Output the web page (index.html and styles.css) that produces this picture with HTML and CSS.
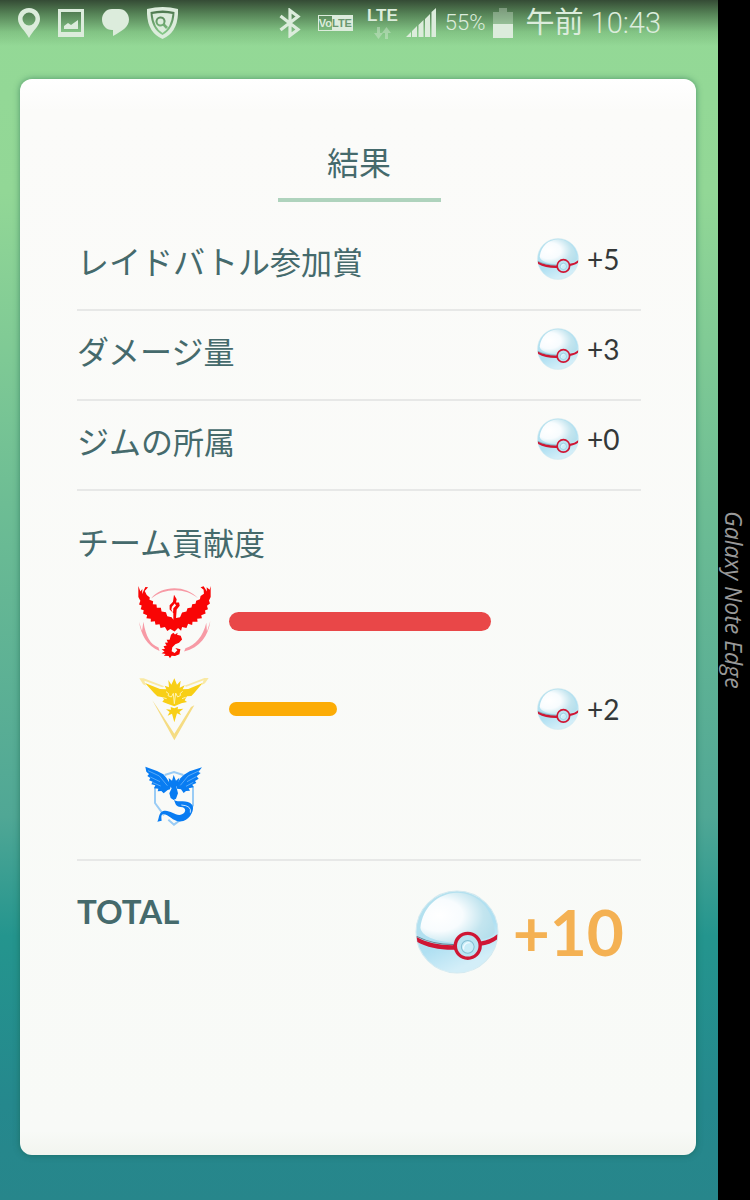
FILE: index.html
```html
<!DOCTYPE html>
<html lang="ja">
<head>
  <meta charset="UTF-8" />
  <meta name="viewport" content="width=device-width, initial-scale=1.0" />
  <title>結果</title>
  <link rel="stylesheet" href="styles.css">
</head>
<body>
  <!-- shared ball icon -->
  <svg class="defs" width="0" height="0" aria-hidden="true">
    <defs>
      <linearGradient id="ballBase" x1="0" y1="0.1" x2="0.4" y2="1">
        <stop offset="0" stop-color="#b5e1ee" />
        <stop offset="0.65" stop-color="#b0e0f2" />
        <stop offset="1" stop-color="#d3eef8" />
      </linearGradient>
      <radialGradient id="ballShine" cx="0.25" cy="0.45" r="0.8">
        <stop offset="0" stop-color="#fff" />
        <stop offset="0.4" stop-color="#f8fcfe" />
        <stop offset="0.75" stop-color="#c3e5ef" />
        <stop offset="1" stop-color="#b5dfec" />
      </radialGradient>
      <symbol id="ball" viewBox="0 0 248 250">
        <circle cx="124" cy="125" r="122" fill="url(#ballBase)" stroke="#d2e9f0" stroke-width="3" />
        <path d="M15 112C22 52 65 10 124 8C188 8 229 58 236 119C240 134 224 143 196 147C174 117 132 122 121 157C74 154 20 143 15 112Z" fill="url(#ballShine)" />
        <path d="M4 140C35 158 75 165 118 164L118 178C75 179 33 171 6 155Z" fill="#cf1634" />
        <path d="M4 138C38 155 75 163 118 162" fill="none" stroke="#65818f" stroke-width="3" />
        <path d="M194 153C213 151 230 144 244 132L243 147C230 157 212 164 194 166Z" fill="#cf1634" />
        <circle cx="156" cy="166" r="37" fill="#b9e4f2" stroke="#cf1634" stroke-width="10" />
        <circle cx="156" cy="169" r="19" fill="#c9edf8" stroke="#85bfd3" stroke-width="3" />
        <path d="M144 177A16 16 0 0 1 162 157" fill="none" stroke="#eefaff" stroke-width="4" />
      </symbol>
    </defs>
  </svg>

  <div class="screen">
    <header class="status-bar">
      <div class="status-left">
        <svg width="22" height="30" viewBox="0 0 22 30"><path fill-rule="evenodd" d="M11 0C4 0 0 5 0 11C0 18 7 22 11 30C15 22 22 18 22 11C22 5 18 0 11 0ZM11 4.500A6.500 6.500 0 1 1 11 17.500A6.500 6.500 0 1 1 11 4.500Z" /></svg>
        <svg width="26" height="28" viewBox="0 0 26 28"><path fill-rule="evenodd" d="M0 0H26V28H0ZM3 3V23H23V3Z" /><path d="M6 20V17L10 14L13 16L20 11V20Z" /></svg>
        <svg width="27" height="27" viewBox="0 0 27 27"><path d="M10 0H17C23 0 27 5 27 10.500C27 18 20 22 11 27V21H10C4 21 0 16 0 10.500C0 5 4 0 10 0Z" /></svg>
        <svg width="31" height="32" viewBox="0 0 31 32"><path fill-rule="evenodd" d="M0 2Q16 -2 31 2Q32 25 15.500 32Q-1 25 0 2ZM3.500 5Q4 22 15.500 28Q27 22 27.500 5Q16 2 3.500 5Z" /><path fill-rule="evenodd" d="M5.500 7Q16 5 25.500 7Q24 21 15.500 26Q7 21 5.500 7ZM13 9.500A5 5 0 1 0 16 18.800L19 22L21 20L18 17A5 5 0 0 0 13 9.500ZM13.500 11.500A3 3 0 1 1 13.500 17.500A3 3 0 1 1 13.500 11.500Z" /></svg>
      </div>
      <div class="status-right">
        <svg width="22" height="30" viewBox="0 0 22 30"><path d="M1.500 8L19 21.500L11 27.500V2.500L19 8.500L1.500 22" fill="none" stroke="#dcecdc" stroke-width="3.200" /></svg>
        <span class="volte"><span class="volte-vo">Vo</span><span class="volte-lte">LTE</span></span>
        <div class="network">
          <span>LTE</span>
          <svg width="17" height="12" viewBox="0 0 17 12"><path d="M3 0H6V6H9L4.500 12L0 6H3ZM11 12H14V6H17L12.500 0L8 6H11Z" /></svg>
        </div>
        <svg width="31" height="29" viewBox="0 0 31 29"><path d="M0 29L5 24V29ZM6 23L11 18V29H6ZM12.500 17L17.500 12V29H12.500ZM19 11L24 6V29H19ZM25.500 4L30 0V29H25.500Z" /></svg>
        <span class="battery-text">55%</span>
        <svg width="20" height="30" viewBox="0 0 20 30"><path d="M6 0H14V4H20V16H0V4H6Z" opacity="0.35" /><path d="M0 16H20V30H0Z" /></svg>
        <time class="clock" datetime="10:43"><span class="ampm">午前</span> 10:43</time>
      </div>
    </header>

    <main class="card">
      <h1>結果</h1>

      <ul class="results">
        <li class="row">
          <h2>レイドバトル<span class="kanji">参加賞</span></h2>
          <div class="reward"><svg class="ball"><use href="#ball" /></svg>+5</div>
        </li>
        <li class="row">
          <h2>ダメージ<span class="kanji">量</span></h2>
          <div class="reward"><svg class="ball"><use href="#ball" /></svg>+3</div>
        </li>
        <li class="row">
          <h2>ジムの<span class="kanji">所属</span></h2>
          <div class="reward"><svg class="ball"><use href="#ball" /></svg>+0</div>
        </li>
      </ul>

      <section class="teams">
        <h2>チーム<span class="kanji">貢献度</span></h2>
        <div class="team">
          <svg class="logo" width="74" height="74" viewBox="50 36 220 220">
            <path d="M92 76C122 37 195 34 232 76C194 42 130 44 92 76Z" fill="#f79aa5" />
            <path d="M56 145C62 184 79 215 117 232L114 222C89 211 77 191 69 145L65 173ZM268 143C263 186 237 223 190 234L194 224C225 213 246 189 256 148L258 174Z" fill="#f79aa5" />
            <path d="M54 39L60 55L66 48L65 63L75 42L83 43L73 54L79 66L88 73L87 80L98 84L97 93L108 94L109 104L121 104L123 115L136 117L140 129L153 132L158 139L158 119L147 109L147 96L157 86L160 65L168 78L166 88L175 88L177 98L168 109L166 134L178 132L184 118L197 115L200 105L212 103L214 93L224 92L226 83L237 78L239 69L249 62L248 50L239 43L248 40L258 55L257 43L266 50L269 39V72L264 82L267 91L258 98L261 108L252 112L254 121L241 126L243 135L229 136L230 145L215 145L214 155L202 151L197 164L184 161L181 172L172 164L162 174L149 167L140 173L133 161L120 164L117 153L105 154L103 144L91 145L91 136L78 135L80 126L68 121L70 111L61 108L64 97L56 94L60 83L54 72Z" fill="#f90505" />
            <path d="M157 119L158 105L166 97L162 91L154 101L152 109Z" fill="#fbfbf9" />
            <path d="M151 184L158 178L163 183L171 178L169 184L180 187L184 198L175 208L164 212L155 221L153 233L162 238L170 230L164 223L179 227L176 242L163 247L153 246L148 254L144 247L130 246L135 241L123 239L132 234L123 227L133 226L129 218L138 216L133 208L142 207L138 199L147 199Z" fill="#f90505" />
          </svg>
          <div class="track"><div class="bar bar-red" style="width: 85%"></div></div>
        </div>
        <div class="team">
          <svg class="logo" width="70" height="66" viewBox="56 33 210 198">
            <path d="M57 40H70L132 64L126 67L72 47L77 62L68 58ZM265 39H252L192 62L198 65L250 46L244 60L254 55Z" fill="#f9e9a4" />
            <path d="M96 106L162 226L222 121L212 126L162 206L110 126Z" fill="#f5dc83" />
            <path d="M74 54L119 72L138 73L133 62L146 67L144 45L153 59L162 40L170 59L181 47L178 68L193 61L187 73L204 72L247 54L221 85L213 93L200 94L193 106L200 111L183 115L162 124L141 116L126 110L131 104L127 97L111 94L101 84Z" fill="#f8cf16" />
            <path d="M137 80L145 86L143 92L153 96L159 85L162 116L166 84L172 96L181 91L179 86L187 79M128 98L139 101M196 97L185 101" fill="none" stroke="#fff3af" stroke-width="3" />
            <path d="M151 126L162 130L173 125L172 133L189 131L177 141L182 150L170 145L162 172L155 146L142 152L148 141L137 133L152 134Z" fill="#f8cf16" />
          </svg>
          <div class="track"><div class="bar bar-yellow" style="width: 35%"></div></div>
          <div class="reward"><svg class="ball"><use href="#ball" /></svg>+2</div>
        </div>
        <div class="team">
          <svg class="logo" width="60" height="60" viewBox="72 34 180 180">
            <path d="M134 61L162 52L190 61M105 98V145L132 182M219 94V152L190 187M145 195L162 210L181 196" fill="none" stroke="#9accf5" stroke-width="6" />
            <path d="M76 36L111 49L130 59L139 69L147 82L154 91L150 104L143 106L131 116L124 109L113 110L115 102L102 101L106 92L94 89L98 81L87 77L91 70L82 64L87 58L79 51ZM246 38L209 50L192 60L181 71L169 91L171 102L183 104L191 115L198 109L210 108L206 101L221 98L217 90L229 85L225 79L236 72L230 65L242 55L235 52Z" fill="#087cf2" />
            <path d="M84 48L118 64L142 93M91 67L120 81M99 84L122 94M236 49L204 64L181 92M229 66L201 81M220 83L198 95" fill="none" stroke="#82c1fb" stroke-width="2" />
            <path d="M161 61L168 78L178 69L175 87L169 96L174 116L168 132L161 136L152 130L148 116L155 101L148 90L146 70L156 78Z" fill="#087cf2" />
            <path d="M162 136C173 145 202 132 217 151C224 164 213 191 190 199C162 207 148 179 130 178C123 179 124 187 125 198L112 201C118 194 114 177 128 170C148 162 168 188 186 179C199 174 200 158 182 157C167 157 166 145 162 136Z" fill="#087cf2" />
            <path d="M184 151Q216 153 211 174" fill="none" stroke="#c3e2ff" stroke-width="3" />
          </svg>
          <div class="track"></div>
        </div>
      </section>

      <section class="total">
        <h2>TOTAL</h2>
        <div class="total-reward"><svg class="ball-large"><use href="#ball" /></svg>+10</div>
      </section>
    </main>
  </div>

  <aside class="edge">Galaxy Note Edge</aside>
</body>
</html>
```
FILE: styles.css
```css
* { box-sizing: border-box; }
body {
  margin: 0;
  display: flex;
  min-height: 100vh;
  background: #000;
  color: #456a6c;
  font-family: Lato, "Noto Sans CJK JP", sans-serif;
}
h1, h2, ul { margin: 0; padding: 0; font-weight: 400; }
svg { display: block; flex-shrink: 0; }
.defs { position: absolute; }

.screen {
  flex: 1;
  display: flex;
  flex-direction: column;
  background: linear-gradient(#94d996 0%, #92d796 16%, #6dbd94 42%, #50a795 68%, #24958e 78%, #25888d 92%, #27868b 100%);
}

/* status bar */
.status-bar {
  display: flex;
  justify-content: space-between;
  height: 79px;
  padding: 0 57px 34px 18px;
  background: linear-gradient(rgba(36,50,36,0.85) 0, rgba(45,75,45,0.6) 14px, rgba(60,110,60,0.2) 32px, transparent 46px);
  color: #dcecdc;
  font-family: Roboto, "Noto Sans CJK JP", sans-serif;
}
.status-bar svg { fill: #dcecdc; }
.status-left, .status-right { display: flex; align-items: center; }
.status-left { gap: 18px; }
.status-right { gap: 8px; }
.volte {
  display: flex;
  margin: 0 6px 0 9px;
  border: 1px solid #dcecdc;
  font: bold 11px/14px "Liberation Sans", sans-serif;
}
.volte-lte { background: #dcecdc; color: #6b9770; }
.network {
  display: flex;
  flex-direction: column;
  align-items: center;
  gap: 2px;
  font: bold 17px/18px "Liberation Sans", sans-serif;
}
.network svg { opacity: 0.4; }
.battery-text { font-size: 22px; font-weight: 300; }
.clock { font-size: 29px; font-weight: 300; line-height: 46px; margin-left: 4px; white-space: nowrap; }
.ampm { font-weight: 400; }

/* result card */
.card {
  flex: 1;
  margin: 0 22px 45px 20px;
  padding: 60px 55px 0 57px;
  border-radius: 12px;
  background: linear-gradient(#fff 0, #fbfbf9 32px, #f8faf7 calc(100% - 24px), #f2f5ef 100%);
  box-shadow: 0 0 6px rgba(20,90,70,0.55);
}
h1 {
  width: 163px;
  margin: 0 auto;
  padding-bottom: 11px;
  border-bottom: 4px solid #afd3bd;
  font-size: 32px;
  line-height: 48px;
  text-align: center;
}
h2 { font-size: 32px; line-height: 40px; }
.kanji { font-size: 31px; }

.results { margin-top: 19px; list-style: none; }
.row {
  display: flex;
  align-items: center;
  justify-content: space-between;
  height: 90px;
  padding-bottom: 12px;
  border-bottom: 2px solid #e7e8e7;
}
.row h2 { padding-top: 6px; }
.reward {
  display: flex;
  align-items: center;
  gap: 8px;
  width: 104px;
  color: #343838;
  font-size: 28px;
}
.ball { width: 42px; height: 42px; }

/* team contribution */
.teams { padding: 32px 0 20px; border-bottom: 2px solid #e7e8e7; }
.team {
  display: flex;
  align-items: center;
  height: 87px;
  padding-left: 57px;
}
.teams h2 { margin-bottom: 15px; }
.logo { width: 80px; }
.track { flex: 1; max-width: 308px; margin-left: 15px; }
.bar { border-radius: 10px; }
.bar-red { height: 19px; background: #e94748; }
.bar-yellow { height: 14px; background: #fcac06; }

.total { display: flex; justify-content: space-between; padding-top: 28px; }
.total h2 { font-size: 33px; font-weight: 700; line-height: 44px; }
.total-reward {
  display: flex;
  align-items: center;
  gap: 14px;
  padding-right: 17px;
  color: #f4b153;
  font-size: 64px;
  font-weight: 700;
  line-height: 86px;
}
.ball-large { width: 84px; height: 84px; }

.edge {
  width: 32px;
  display: flex;
  align-items: center;
  justify-content: center;
  writing-mode: vertical-rl;
  color: #999;
  font: italic 400 23px/32px "Open Sans", sans-serif;
}
```
